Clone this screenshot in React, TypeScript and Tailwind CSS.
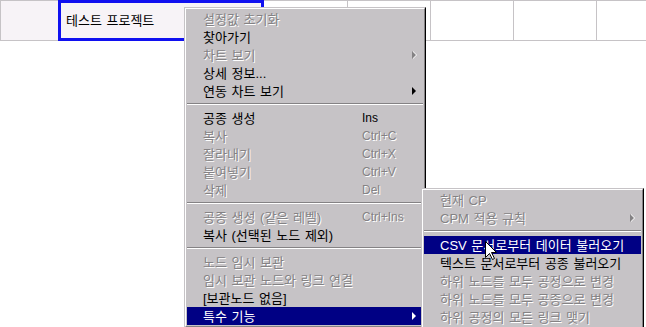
import React from 'react'

type Item =
  | { sep: true }
  | { label: string; key?: string; disabled?: boolean; arrow?: boolean; active?: boolean }

const mainItems: Item[] = [
  { label: '설정값 초기화', disabled: true },
  { label: '찾아가기' },
  { label: '차트 보기', disabled: true, arrow: true },
  { label: '상세 정보...' },
  { label: '연동 차트 보기', arrow: true },
  { sep: true },
  { label: '공종 생성', key: 'Ins' },
  { label: '복사', key: 'Ctrl+C', disabled: true },
  { label: '잘라내기', key: 'Ctrl+X', disabled: true },
  { label: '붙여넣기', key: 'Ctrl+V', disabled: true },
  { label: '삭제', key: 'Del', disabled: true },
  { sep: true },
  { label: '공종 생성 (같은 레벨)', key: 'Ctrl+Ins', disabled: true },
  { label: '복사 (선택된 노드 제외)' },
  { sep: true },
  { label: '노드 임시 보관', disabled: true },
  { label: '임시 보관 노드와 링크 연결', disabled: true },
  { label: '[보관노드 없음]' },
  { label: '특수 기능', arrow: true, active: true },
]

const subItems: Item[] = [
  { label: '현재 CP', disabled: true },
  { label: 'CPM 적용 규칙', disabled: true, arrow: true },
  { sep: true },
  { label: 'CSV 문서로부터 데이터 불러오기', active: true },
  { label: '텍스트 문서로부터 공종 불러오기' },
  { label: '하위 노드를 모두 공정으로 변경', disabled: true },
  { label: '하위 노드를 모두 공종으로 변경', disabled: true },
  { label: '하위 공정의 모든 링크 맺기', disabled: true },
]

function Arrow({ disabled, active }: { disabled?: boolean; active?: boolean }) {
  const fill = active ? '#ffffff' : disabled ? '#848284' : '#000000'
  return (
    <svg width="5" height="8" viewBox="0 0 5 8" className="shrink-0" style={{ overflow: 'visible' }}>
      {disabled && <path d="M1 0 L5 4 L1 8 Z" fill="#ffffff" />}
      <path d="M0 0 L4 4 L0 8 Z" fill={fill} />
    </svg>
  )
}

function Menu({ items, width, labelWidth }: { items: Item[]; width: string; labelWidth: string }) {
  return (
    <div className={`${width} border border-t-[#c6c3c6] border-l-[#c6c3c6] border-r-black border-b-black bg-[#c6c3c6]`}>
      <div className="border border-t-white border-l-white border-r-[#848284] border-b-[#848284] p-px">
        {items.map((it, i) => {
          if ('sep' in it) {
            return (
              <div key={i} className="h-[9px] pt-[3px]">
                <div className="border-t border-b border-t-[#848284] border-b-white" />
              </div>
            )
          }
          const color = it.active
            ? 'bg-[#000084] text-white'
            : it.disabled
              ? 'text-[#848284] [text-shadow:1px_1px_0_#ffffff]'
              : 'text-black'
          return (
            <div key={i} className={`flex h-[18px] items-center pl-[16px] pr-[6px] whitespace-nowrap ${color}`}>
              <span className={labelWidth}>{it.label}</span>
              <span className="flex-1 text-[12px]">{it.key}</span>
              {it.arrow && <Arrow disabled={it.disabled} active={it.active} />}
            </div>
          )
        })}
      </div>
    </div>
  )
}

export default function App() {
  return (
    <div className="relative w-[646px] h-[327px] overflow-hidden bg-white font-['Liberation_Sans','Noto_Sans_CJK_KR',sans-serif] text-[13px] leading-none [word-spacing:1px]">
      {/* grid row */}
      <div className="flex h-[41px]">
        <div className="w-[58px] border-l border-t border-b border-[#c6c3c6] bg-[#f7f3f7]" />
        <div className="flex w-[206px] items-center border-[3px] border-[#1010f0] bg-[#f7f3f7] pl-[5px] text-black">
          테스트 프로젝트
        </div>
        <div className="w-[84px] border-t border-b border-r border-[#c6c3c6]" />
        <div className="w-[83px] border-t border-b border-r border-[#c6c3c6]" />
        <div className="w-[83px] border-t border-b border-r border-[#c6c3c6]" />
        <div className="w-[83px] border-t border-b border-r border-[#c6c3c6]" />
        <div className="flex-1 border-t border-b border-[#c6c3c6]" />
      </div>

      {/* context menu */}
      <div className="absolute left-[184px] top-[7px]">
        <Menu items={mainItems} width="w-[242px]" labelWidth="w-[159px]" />
      </div>

      {/* submenu */}
      <div className="absolute left-[421px] top-[188px]">
        <Menu items={subItems} width="w-[223px]" labelWidth="" />
      </div>

      {/* mouse cursor */}
      <svg className="absolute left-[485px] top-[241px]" width="13" height="20" viewBox="0 0 13 20">
        <path
          d="M0.5 0.5 L0.5 16.5 L4.5 12.5 L7.5 18.5 L9.5 17.5 L6.5 11.5 L11.5 11.5 Z"
          fill="#ffffff"
          stroke="#000000"
          strokeWidth="1"
        />
      </svg>
    </div>
  )
}
